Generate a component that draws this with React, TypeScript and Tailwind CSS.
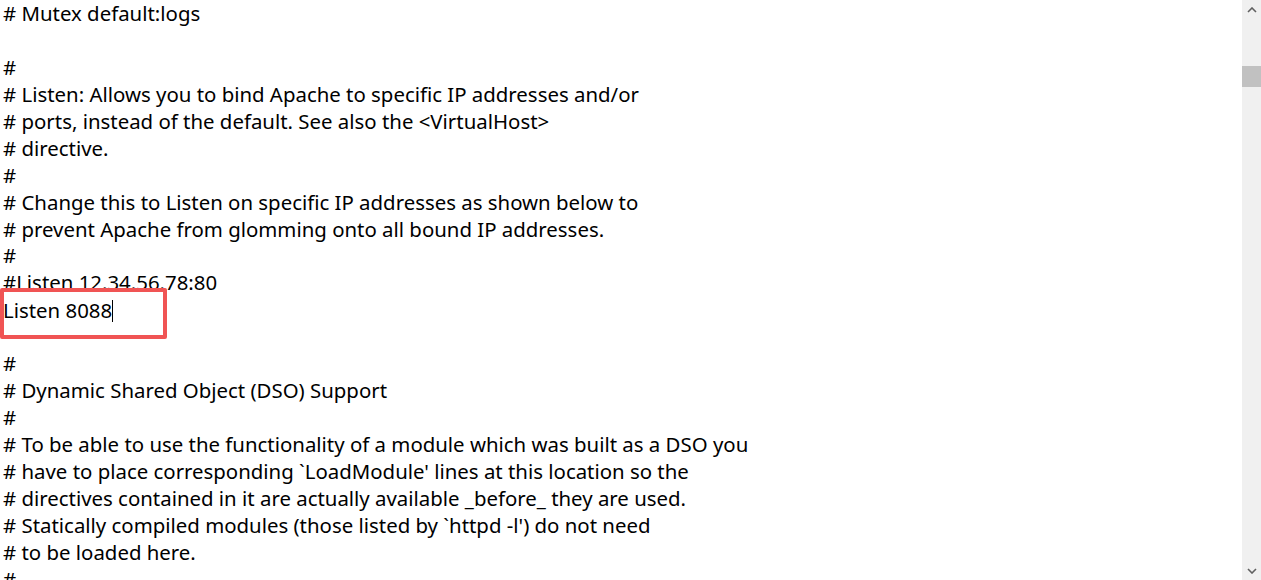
import React from "react"

const lines = [
  "# Mutex default:logs",
  "",
  "#",
  "# Listen: Allows you to bind Apache to specific IP addresses and/or",
  "# ports, instead of the default. See also the <VirtualHost>",
  "# directive.",
  "#",
  "# Change this to Listen on specific IP addresses as shown below to",
  "# prevent Apache from glomming onto all bound IP addresses.",
  "#",
  "#Listen 12.34.56.78:80",
  "Listen 8088",
  "",
  "#",
  "# Dynamic Shared Object (DSO) Support",
  "#",
  "# To be able to use the functionality of a module which was built as a DSO you",
  "# have to place corresponding `LoadModule' lines at this location so the",
  "# directives contained in it are actually available _before_ they are used.",
  "# Statically compiled modules (those listed by `httpd -l') do not need",
  "# to be loaded here.",
  "#",
]

const App = () => {
  return (
    <div className="flex h-[580px] w-[1261px] overflow-hidden bg-white">
      {/* editor text */}
      <div className="relative flex-1 overflow-hidden pl-[3px] font-['Noto_Sans',sans-serif] text-[20.4px] leading-[26.95px] text-black">
        {lines.map((line, i) => (
          <div key={i} className="h-[26.95px] whitespace-pre">
            {line}
            {i === 11 && <span className="inline-block h-[22px] w-[1px] translate-y-[4px] bg-black" />}
          </div>
        ))}
        <div className="absolute left-0 top-[288px] h-[51px] w-[167px] rounded-[2px] border-[4px] border-[#f05454]" />
      </div>

      {/* scrollbar */}
      <div className="flex w-[19px] flex-col bg-[#f0f0f0]">
        <div className="flex h-[19px] items-center justify-center">
          <svg width="10" height="6" viewBox="0 0 10 6">
            <path d="M1 5 L5 1 L9 5" fill="none" stroke="#606060" strokeWidth="1.6" />
          </svg>
        </div>
        <div className="mt-[47px] h-[21px] bg-[#c1c1c1]" />
        <div className="flex-1" />
        <div className="flex h-[19px] items-center justify-center">
          <svg width="10" height="6" viewBox="0 0 10 6">
            <path d="M1 1 L5 5 L9 1" fill="none" stroke="#606060" strokeWidth="1.6" />
          </svg>
        </div>
      </div>
    </div>
  )
}

export default App
